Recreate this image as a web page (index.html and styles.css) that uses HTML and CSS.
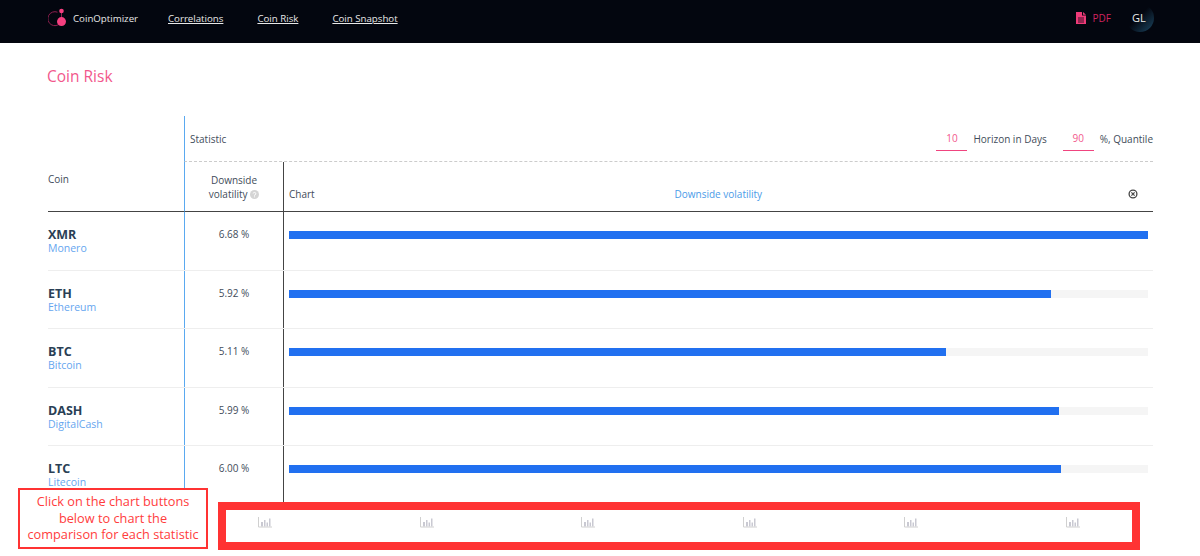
FILE: index.html
```html
<!DOCTYPE html>
<html>
  <head>
    <meta charset="UTF-8">
    <title>Coin Risk</title>
    <link rel="stylesheet" href="styles.css">
  </head>
  <body>
    <div class="nav">
      <div class="brand">
        <svg class="logo" width="18" height="20" viewBox="0 0 18 20">
          <path d="M9.5 4.2A7 7 0 1 0 12.4 15" fill="none" stroke="#8d1f4e" stroke-width="1"/>
          <path d="M13.5 4.5V12" stroke="#8d1f4e" stroke-width="1"/>
          <circle cx="13.5" cy="3" r="2.3" fill="#f43f7f"/>
          <circle cx="13.5" cy="13.6" r="4.5" fill="#f43f7f"/>
        </svg>
        <span>CoinOptimizer</span>
      </div>
      <a class="nav-link" href="#">Correlations</a>
      <a class="nav-link" href="#">Coin Risk</a>
      <a class="nav-link" href="#">Coin Snapshot</a>
      <div class="nav-right">
        <svg width="10" height="12" viewBox="0 0 10 12">
          <path d="M0 0H6V3.5H10V12H0Z" fill="#ee3a78"/>
          <path d="M7 0L10 2.7H7Z" fill="#ee3a78"/>
          <path d="M2 6H8M2 8H8M2 10H8" stroke="#03060f" stroke-width="0.8"/>
        </svg>
        <span class="pdf">PDF</span>
        <div class="avatar">GL</div>
      </div>
    </div>

    <div class="content">
      <h1 class="title">Coin Risk</h1>

      <div class="head">
        <div class="head-coin">Coin</div>
        <div class="head-stat">
          <span>Statistic</span>
          <div class="controls">
            <span class="num-input">10</span>
            <span class="control-label">Horizon in Days</span>
            <span class="num-input">90</span>
            <span>%, Quantile</span>
          </div>
        </div>
        <div class="head-vol">
          <span>Downside<br>volatility
            <svg class="help" width="9" height="9" viewBox="0 0 9 9">
              <circle cx="4.5" cy="4.5" r="4.5" fill="#d4d4d4"/>
              <path d="M3.2 3.5A1.3 1.3 0 1 1 4.5 5V5.6M4.5 6.4V7.3" fill="none" stroke="#fff" stroke-width="1"/>
            </svg>
          </span>
        </div>
        <div class="head-chart">
          <span>Chart</span>
          <span class="chart-name">Downside volatility</span>
          <svg width="10" height="10" viewBox="0 0 10 10">
            <circle cx="5" cy="5" r="3.9" fill="none" stroke="#444" stroke-width="1.3"/>
            <path d="M3.4 3.4L6.6 6.6M6.6 3.4L3.4 6.6" stroke="#444" stroke-width="1.2"/>
          </svg>
        </div>
      </div>

      <div class="row">
        <div class="coin"><b>XMR</b><span>Monero</span></div>
        <div class="value">6.68 %</div>
        <div class="chart"><div class="track"><div class="bar" style="width: 100%"></div></div></div>
      </div>
      <div class="row">
        <div class="coin"><b>ETH</b><span>Ethereum</span></div>
        <div class="value">5.92 %</div>
        <div class="chart"><div class="track"><div class="bar" style="width: 88.7%"></div></div></div>
      </div>
      <div class="row">
        <div class="coin"><b>BTC</b><span>Bitcoin</span></div>
        <div class="value">5.11 %</div>
        <div class="chart"><div class="track"><div class="bar" style="width: 76.5%"></div></div></div>
      </div>
      <div class="row">
        <div class="coin"><b>DASH</b><span>DigitalCash</span></div>
        <div class="value">5.99 %</div>
        <div class="chart"><div class="track"><div class="bar" style="width: 89.6%"></div></div></div>
      </div>
      <div class="row last">
        <div class="coin"><b>LTC</b><span>Litecoin</span></div>
        <div class="value">6.00 %</div>
        <div class="chart"><div class="track"><div class="bar" style="width: 89.9%"></div></div></div>
      </div>
    </div>

    <div class="note">Click on the chart buttons below to chart the comparison for each statistic</div>

    <div class="chart-buttons">
      <svg width="14" height="11" viewBox="0 0 14 11"><use href="#bars"/></svg>
      <svg width="14" height="11" viewBox="0 0 14 11"><use href="#bars"/></svg>
      <svg width="14" height="11" viewBox="0 0 14 11"><use href="#bars"/></svg>
      <svg width="14" height="11" viewBox="0 0 14 11"><use href="#bars"/></svg>
      <svg width="14" height="11" viewBox="0 0 14 11"><use href="#bars"/></svg>
      <svg width="14" height="11" viewBox="0 0 14 11"><use href="#bars"/></svg>
    </div>

    <svg class="defs" width="0" height="0">
      <symbol id="bars" viewBox="0 0 14 11">
        <path d="M0.5 0V10H14" fill="none" stroke="#d0d0d0" stroke-width="1"/>
        <path d="M3 5H5V9.5H3ZM6 3H7.5V9.5H6ZM8.5 5.5H10V9.5H8.5ZM11 1.5H12.5V9.5H11Z" fill="#c9c9d2"/>
      </symbol>
    </svg>
  </body>
</html>
```

FILE: styles.css
```css
html, body {
  height: 556px;
  overflow: hidden;
}
body {
  margin: 0;
  position: relative;
  background: #fff;
  color: #3f4c5a;
  font-size: 10px;
  font-family: "Open Sans", "Noto Sans", sans-serif;
}
.nav {
  display: flex;
  align-items: center;
  height: 43px;
  padding: 0 46px 7px 48px;
  background: #03060f;
  color: #e8e8e8;
  font-size: 9.7px;
  box-sizing: border-box;
}
.brand {
  display: flex;
  align-items: center;
  width: 120px;
}
.logo {
  margin-right: 7px;
}
.nav-link {
  margin-right: 34px;
  color: #e8e8e8;
}
.nav-right {
  display: flex;
  align-items: center;
  margin-left: auto;
}
.pdf {
  margin-left: 7px;
  color: #d0235f;
  font-size: 10px;
}
.avatar {
  width: 28px;
  height: 28px;
  margin-left: 15px;
  border-radius: 50%;
  background: linear-gradient(135deg, #03060f 45%, #1c4763);
  color: #eee;
  font-size: 11px;
  line-height: 28px;
  text-indent: 6px;
}
.content {
  padding: 0 47px 0 48px;
}
.title {
  margin: 0;
  padding-top: 23px;
  height: 50px;
  margin-left: -1px;
  color: #f2588c;
  font-size: 15.5px;
  font-weight: 400;
  line-height: 20px;
}
.head {
  display: grid;
  grid-template-columns: 136px 99px 1fr;
  grid-template-rows: 46px 50px;
}
.head-coin {
  grid-row: 1 / 3;
  display: flex;
  align-items: center;
  padding-top: 31px;
  box-sizing: border-box;
  border-bottom: 1px solid #444;
}
.head-stat {
  grid-column: 2 / 4;
  display: flex;
  align-items: center;
  justify-content: space-between;
  padding-left: 5px;
  border-left: 1px solid #5aa9f0;
  border-bottom: 1px dashed #ccc;
}
.controls {
  display: flex;
  align-items: center;
}
.num-input {
  width: 31px;
  height: 23px;
  border-bottom: 1px solid #f0447f;
  color: #f2588c;
  line-height: 23px;
  text-align: center;
}
.control-label {
  margin: 0 16px 0 6px;
}
.controls span:last-child {
  margin-left: 6px;
}
.head-vol {
  display: flex;
  align-items: center;
  justify-content: center;
  border-left: 1px solid #5aa9f0;
  border-bottom: 1px solid #444;
  line-height: 14px;
  text-align: center;
}
.help {
  vertical-align: -1px;
}
.head-chart {
  display: flex;
  align-items: center;
  justify-content: space-between;
  padding: 14px 15px 0 5px;
  border-left: 1px solid #444;
  border-bottom: 1px solid #444;
}
.chart-name {
  padding-right: 6px;
  color: #4b9be8;
}
.row {
  display: grid;
  grid-template-columns: 136px 99px 1fr;
  height: 58.5px;
  box-sizing: border-box;
  border-bottom: 1.5px solid #eee;
}
.row.last {
  border-bottom: 0;
}
.coin {
  display: flex;
  flex-direction: column;
  padding-top: 15px;
  color: #66a6ef;
  font-size: 10.5px;
  line-height: 13px;
}
.coin b {
  color: #2a3f55;
  font-size: 12.5px;
  line-height: 15px;
}
.value {
  padding-top: 15px;
  border-left: 1px solid #5aa9f0;
  line-height: 14px;
  text-align: center;
}
.chart {
  padding: 19px 5px 0 5px;
  border-left: 1px solid #444;
}
.track {
  height: 8px;
  background: #f5f5f5;
}
.bar {
  height: 8px;
  background: #2170f0;
}
.note {
  position: absolute;
  left: 18px;
  top: 488px;
  width: 190px;
  height: 61px;
  padding: 3px 6px 0;
  box-sizing: border-box;
  border: 2px solid #ff3333;
  background: #fff;
  color: #ff3c3c;
  font-size: 12.75px;
  line-height: 16.5px;
  text-align: center;
}
.chart-buttons {
  position: absolute;
  left: 218px;
  top: 502px;
  display: flex;
  gap: 147.6px;
  width: 922px;
  height: 48px;
  padding: 7px 0 0 32px;
  box-sizing: border-box;
  border: 8px solid #ff3333;
  background: #fff;
}
.defs {
  position: absolute;
}
```
